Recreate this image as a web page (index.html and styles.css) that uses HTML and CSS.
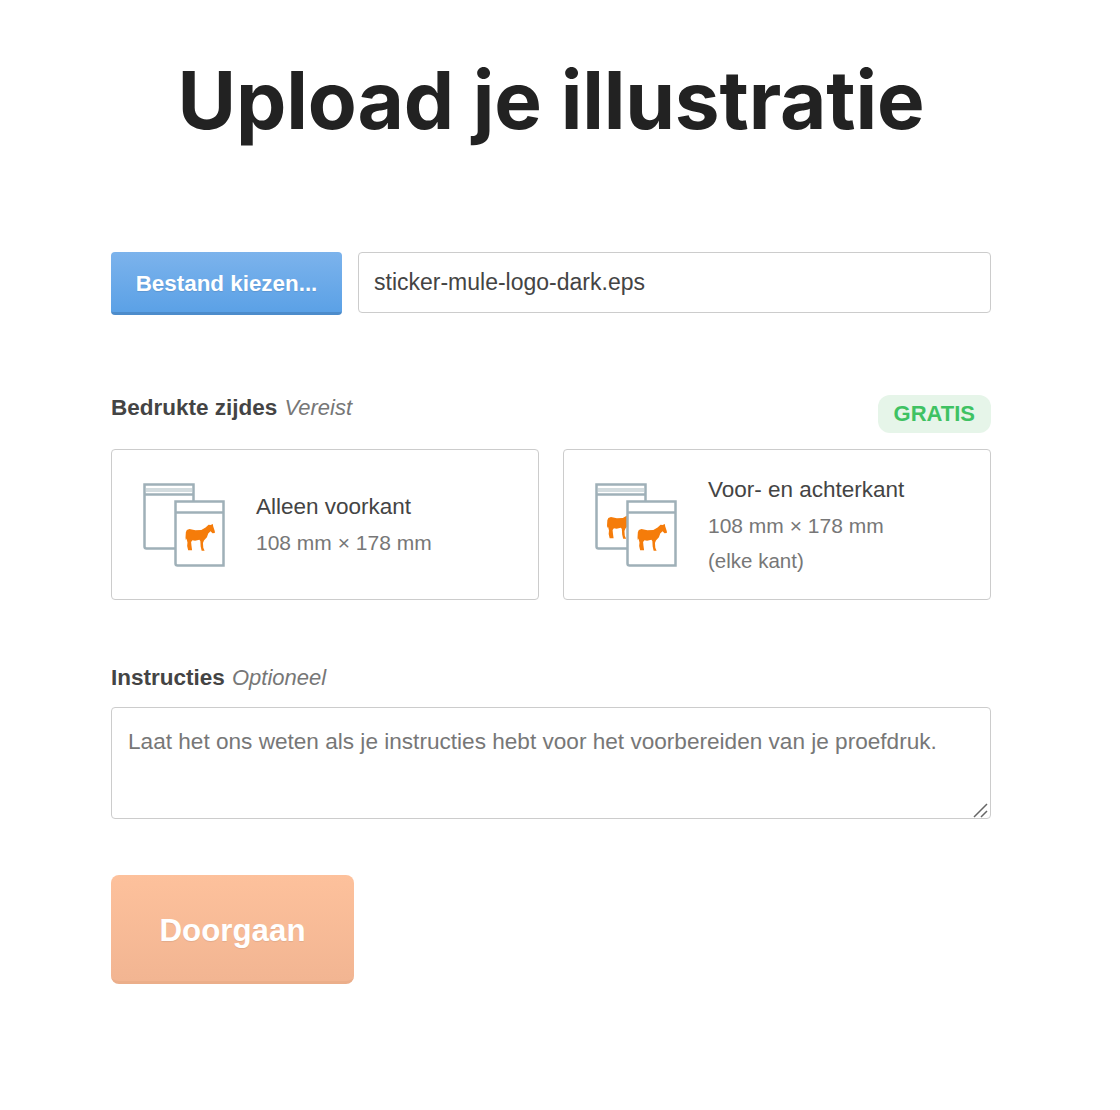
FILE: index.html
```html
<!DOCTYPE html>
<html lang="nl">
<head>
  <meta charset="UTF-8">
  <meta name="viewport" content="width=device-width, initial-scale=1">
  <title>Upload je illustratie</title>
  <link rel="stylesheet" href="styles.css">
</head>
<body>
  <svg class="defs" width="0" height="0" aria-hidden="true">
    <symbol id="horse" viewBox="0 0 90 82">
      <path d="M84 0l1 7 5 15v5l-7 1-6-6-7 7-4 11-9 10-3 8 1 14 4 9h-9l-3-13-1-16-3-4-13 3-8-2-4 6 1 10 2 15H9l-3-13 1-11-3-12-2 5-1-8 1-16 3-7 8-3 18 4 18-1 13-7 9-9 6 1z"/>
    </symbol>
  </svg>

  <main class="wrap">
    <h1>Upload je illustratie</h1>

    <div class="file-row">
      <button class="btn-file" type="button">Bestand kiezen...</button>
      <div class="file-name">sticker-mule-logo-dark.eps</div>
    </div>

    <div class="label-row">
      <div class="label"><b>Bedrukte zijdes</b> <i>Vereist</i></div>
      <span class="badge">GRATIS</span>
    </div>

    <div class="options">
      <div class="option">
        <svg class="sheets" width="82" height="84" viewBox="0 0 82 84">
          <path class="sheet" d="M1.500 1.500h49v64H3.500a2 2 0 0 1-2-2z"/>
          <path class="band" d="M3 5h46v4H3z"/>
          <path class="sheet-line" d="M1.500 11.500h49"/>
          <path class="sheet" d="M32.500 18.500h48v64H34.500a2 2 0 0 1-2-2z"/>
          <path class="sheet-line" d="M32.500 29.500h48"/>
          <use class="horse" href="#horse" x="42" y="41" width="30" height="27"/>
        </svg>
        <div class="option-text">
          <div class="option-title">Alleen voorkant</div>
          <div class="option-sub">108 mm × 178 mm</div>
        </div>
      </div>
      <div class="option">
        <svg class="sheets" width="82" height="84" viewBox="0 0 82 84">
          <path class="sheet" d="M1.500 1.500h49v64H3.500a2 2 0 0 1-2-2z"/>
          <path class="band" d="M3 5h46v4H3z"/>
          <path class="sheet-line" d="M1.500 11.500h49"/>
          <use class="horse" href="#horse" x="11.500" y="29" width="30" height="27"/>
          <path class="sheet" d="M32.500 18.500h48v64H34.500a2 2 0 0 1-2-2z"/>
          <path class="sheet-line" d="M32.500 29.500h48"/>
          <use class="horse" href="#horse" x="42" y="41" width="30" height="27"/>
        </svg>
        <div class="option-text">
          <div class="option-title">Voor- en achterkant</div>
          <div class="option-sub">108 mm × 178 mm</div>
          <div class="option-sub option-note">(elke kant)</div>
        </div>
      </div>
    </div>

    <div class="label notes-label"><b>Instructies</b> <i>Optioneel</i></div>
    <div class="notes-box">
      <textarea class="notes" placeholder="Laat het ons weten als je instructies hebt voor het voorbereiden van je proefdruk."></textarea>
      <svg class="grip" width="15" height="15" viewBox="0 0 15 15"><path d="M1 14L14 1M8 14l6-6"/></svg>
    </div>

    <button class="btn-next" type="button">Doorgaan</button>
  </main>
</body>
</html>
```

FILE: styles.css
```css
* { box-sizing: border-box; margin: 0; padding: 0; }
body { background: #fff; color: #444; font: 22px/1.5 "Liberation Sans", Arial, sans-serif; }
.defs { position: absolute; }
.wrap { width: 880px; margin-left: 111px; }

h1 {
  padding-top: 54px;
  height: 252px;
  font: 700 80px/92px Inter, sans-serif;
  color: #222;
  text-align: center;
  letter-spacing: -.15px;
}

.file-row { display: flex; gap: 16px; height: 63px; }
.btn-file {
  width: 231px;
  height: 63px;
  padding-top: 4px;
  border: 0;
  border-bottom: 3px solid #4d8ccb;
  border-radius: 4px;
  background: linear-gradient(#7cb3ec, #5ba1e6);
  color: #fff;
  font: 700 22.400px "Liberation Sans", Arial, sans-serif;
  text-shadow: 0 1px 1px rgba(0,0,0,.1);
}
.file-name {
  flex: 1;
  height: 61px;
  padding: 0 15px;
  border: 1px solid #ccc;
  border-radius: 4px;
  font-size: 23px;
  line-height: 59px;
}

.label-row { display: flex; justify-content: space-between; margin-top: 80px; height: 54px; }
.label { font-size: 22px; line-height: 26px; }
.label b { font-size: 22.500px; }
.label i { color: #777; margin-left: 1px; }
.badge {
  height: 38px;
  padding: 0 16px;
  border-radius: 12px;
  background: #e6f5e9;
  color: #3fc263;
  font-weight: 700;
  line-height: 37px;
}

.options { display: flex; gap: 24px; }
.option {
  flex: 1;
  display: flex;
  align-items: center;
  gap: 31px;
  height: 151px;
  padding-left: 31px;
  border: 1px solid #ccc;
  border-radius: 4px;
}
.sheets { flex: none; }
.sheet { fill: #fff; stroke: #9fb0b8; stroke-width: 2.500; }
.sheet-line { fill: none; stroke: #9fb0b8; stroke-width: 2.500; }
.band { fill: #d3dcdf; }
.horse { fill: #f57c0a; }
.option-title { font-size: 22.500px; line-height: 36px; }
.option-sub { font-size: 21px; line-height: 35px; color: #777; }
.option-note { font-size: 20.500px; }

.notes-label { margin-top: 65px; height: 42px; }
.notes-box { position: relative; height: 112px; }
.notes {
  display: block;
  width: 880px;
  height: 112px;
  padding: 19px 16px;
  border: 1px solid #ccc;
  border-radius: 4px;
  color: #444;
  font: 22.600px/1.3 "Liberation Sans", Arial, sans-serif;
  resize: none;
}
.notes::placeholder { color: #777; opacity: 1; }
.grip { position: absolute; right: 3px; bottom: 1px; fill: none; stroke: #666; stroke-width: 1.500; }

.btn-next {
  display: block;
  width: 243px;
  height: 109px;
  margin-top: 56px;
  padding-top: 6px;
  border: 0;
  border-bottom: 3px solid #ebae8a;
  border-radius: 8px;
  background: linear-gradient(#fdc19c, #f2b592);
  color: #fff;
  font: 700 31.300px "Liberation Sans", Arial, sans-serif;
  text-shadow: 0 1px 1px rgba(0,0,0,.08);
}
```
